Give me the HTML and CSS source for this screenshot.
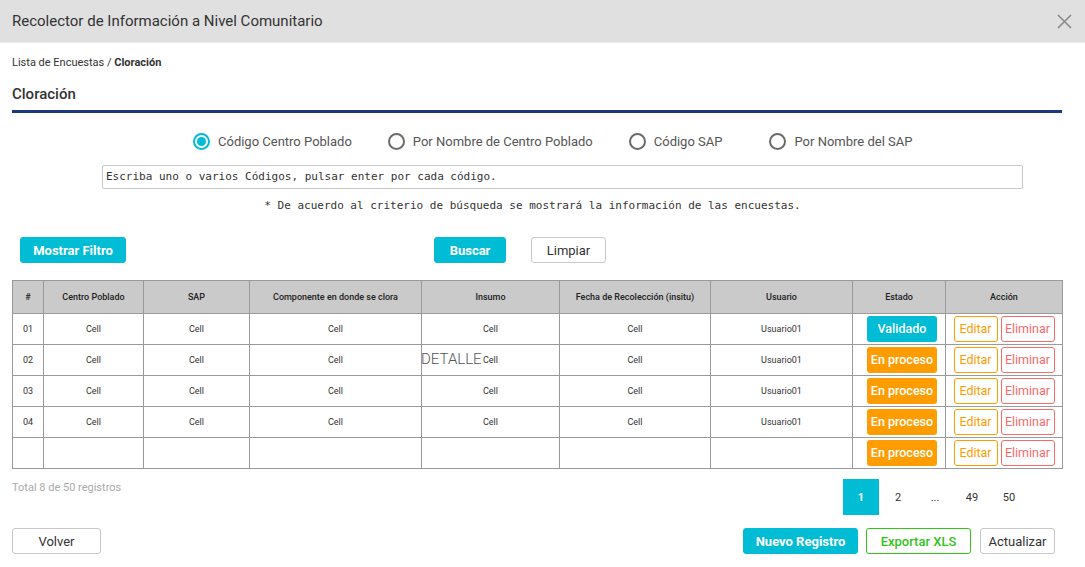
FILE: index.html
```html
<!DOCTYPE html>
<html lang="es">
<head>
<meta charset="utf-8">
<title>Recolector de Información a Nivel Comunitario</title>
<link rel="stylesheet" href="styles.css">
</head>
<body>
<div class="modal">
  <header class="modal-header">
    <h1 class="modal-title">Recolector de Información a Nivel Comunitario</h1>
    <button class="close" aria-label="Cerrar">
      <svg width="15" height="15" viewBox="0 0 15 15"><path d="M1 1L14 14M14 1L1 14" stroke="#8a8a8a" stroke-width="1.6" fill="none"/></svg>
    </button>
  </header>
  <main class="modal-body">
    <nav class="breadcrumb">Lista de Encuestas / <b>Cloración</b></nav>
    <h2 class="section-title">Cloración</h2>

    <div class="radios">
      <label class="radio checked"><span class="dot"></span>Código Centro Poblado</label>
      <label class="radio"><span class="dot"></span>Por Nombre de Centro Poblado</label>
      <label class="radio r3"><span class="dot"></span>Código SAP</label>
      <label class="radio"><span class="dot"></span>Por Nombre del SAP</label>
    </div>
    <div class="search-box">Escriba uno o varios Códigos, pulsar enter por cada código.</div>
    <p class="note">* De acuerdo al criterio de búsqueda se mostrará la información de las encuestas.</p>

    <div class="actions">
      <button class="btn btn-primary filtro">Mostrar Filtro</button>
      <button class="btn btn-primary buscar">Buscar</button>
      <button class="btn btn-default limpiar">Limpiar</button>
    </div>

    <div class="table-wrap">
      <table class="grid">
        <colgroup>
          <col style="width:31px"><col style="width:100px"><col style="width:106px"><col style="width:172px"><col style="width:138px"><col style="width:151px"><col style="width:142px"><col style="width:93px"><col style="width:117px">
        </colgroup>
        <thead>
          <tr><th>#</th><th>Centro Poblado</th><th>SAP</th><th>Componente en donde se clora</th><th>Insumo</th><th>Fecha de Recolección (insitu)</th><th>Usuario</th><th>Estado</th><th>Acción</th></tr>
        </thead>
        <tbody>
          <tr><td class="num">01</td><td>Cell</td><td>Cell</td><td>Cell</td><td>Cell</td><td>Cell</td><td>Usuario01</td><td class="st"><span class="badge ok">Validado</span></td><td class="acts"><span class="ob edit">Editar</span><span class="ob del">Eliminar</span></td></tr>
          <tr><td class="num">02</td><td>Cell</td><td>Cell</td><td>Cell</td><td>Cell</td><td>Cell</td><td>Usuario01</td><td class="st"><span class="badge wip">En proceso</span></td><td class="acts"><span class="ob edit">Editar</span><span class="ob del">Eliminar</span></td></tr>
          <tr><td class="num">03</td><td>Cell</td><td>Cell</td><td>Cell</td><td>Cell</td><td>Cell</td><td>Usuario01</td><td class="st"><span class="badge wip">En proceso</span></td><td class="acts"><span class="ob edit">Editar</span><span class="ob del">Eliminar</span></td></tr>
          <tr><td class="num">04</td><td>Cell</td><td>Cell</td><td>Cell</td><td>Cell</td><td>Cell</td><td>Usuario01</td><td class="st"><span class="badge wip">En proceso</span></td><td class="acts"><span class="ob edit">Editar</span><span class="ob del">Eliminar</span></td></tr>
          <tr><td class="num"></td><td></td><td></td><td></td><td></td><td></td><td></td><td class="st"><span class="badge wip">En proceso</span></td><td class="acts"><span class="ob edit">Editar</span><span class="ob del">Eliminar</span></td></tr>
        </tbody>
      </table>
      <span class="detalle">DETALLE</span>
    </div>

    <div class="footer-info">
      <span class="total">Total 8 de 50 registros</span>
      <ul class="pager">
        <li class="active">1</li><li>2</li><li>...</li><li>49</li><li>50</li>
      </ul>
    </div>

    <div class="bottom">
      <button class="btn btn-default volver">Volver</button>
      <div class="bottom-right">
        <button class="btn btn-primary nuevo">Nuevo Registro</button>
        <button class="btn btn-green exportar">Exportar XLS</button>
        <button class="btn btn-default actualizar">Actualizar</button>
      </div>
    </div>
  </main>
</div>
</body>
</html>
```
FILE: styles.css
```css
* { box-sizing: border-box; }
html, body { margin: 0; padding: 0; background: #fff; }
body { font-family: Roboto, "Noto Sans", Arial, sans-serif; color: #333; width: 1085px; height: 567px; overflow: hidden; }

.modal-header {
  height: 43px;
  background: #e0e0e0;
  border-bottom: 1px solid #ececec;
  display: flex;
  align-items: center;
  justify-content: space-between;
  padding: 0 13px 0 12px;
}
.modal-title { margin: 0; font-size: 15px; font-weight: 400; color: #333; }
.close { border: 0; background: none; padding: 0; width: 15px; height: 15px; display: flex; }

.modal-body { padding: 0 23px 0 12px; }

.breadcrumb { margin-top: 13px; font-size: 11px; line-height: 14px; color: #333; }
.breadcrumb b { font-weight: 700; }

.section-title {
  margin: 14px 0 0;
  font-size: 15px;
  line-height: 20px;
  font-weight: 500;
  color: #333;
  padding-bottom: 6px;
  border-bottom: 3px solid #1d3782;
}

.radios { display: flex; align-items: center; margin: 20px 0 0 181px; height: 16px; }
.radio { display: flex; align-items: center; font-size: 13px; color: #555; margin-right: 36px; }
.radio.r3 { margin-right: 47px; }
.dot {
  width: 17px; height: 17px;
  border: 2px solid #6b6b6b;
  border-radius: 50%;
  margin-right: 8px;
  display: inline-flex; align-items: center; justify-content: center;
}
.radio.checked .dot { border-color: #00bcd4; }
.radio.checked .dot::after { content: ""; width: 9px; height: 9px; border-radius: 50%; background: #00bcd4; }

.search-box {
  margin: 16px 0 0 90px;
  width: 921px;
  height: 24px;
  border: 1px solid #c8c8c8;
  border-radius: 2px;
  font-family: "DejaVu Sans Mono", "Liberation Mono", monospace;
  font-size: 11px;
  line-height: 22px;
  padding-left: 3px;
  color: #333;
}
.note {
  margin: 10px 0 0;
  text-align: center;
  padding-right: 9px;
  font-family: "DejaVu Sans Mono", "Liberation Mono", monospace;
  font-size: 11px;
  line-height: 14px;
  color: #333;
}

.btn {
  font-family: Roboto, "Noto Sans", Arial, sans-serif;
  font-size: 13px;
  height: 26px;
  border-radius: 3px;
  padding: 0;
  cursor: pointer;
}
.btn-primary { background: #00bcd4; color: #fff; border: 1px solid #00bcd4; font-weight: 700; }
.btn-default { background: #fff; color: #333; border: 1px solid #c8c8c8; }
.btn-green { background: #fff; color: #33c41a; border: 1px solid #33c41a; font-weight: 500; }

.actions { display: flex; margin-top: 24px; padding-left: 8px; }
.filtro { width: 106px; }
.buscar { width: 72px; margin-left: 308px; }
.limpiar { width: 75px; margin-left: 25px; }

.table-wrap { position: relative; margin-top: 17px; }
.grid { border-collapse: collapse; table-layout: fixed; width: 1050px; }
.grid th, .grid td { border: 1px solid #9a9a9a; text-align: center; padding: 0; }
.grid th { background: #cacaca; height: 33px; font-size: 9px; font-weight: 500; color: #222; }
.grid td { height: 31px; font-size: 9px; color: #333; }
.grid td.num { text-align: left; padding-left: 10px; }
.grid td.st { padding-left: 6px; }

.badge {
  display: inline-block;
  width: 70px; height: 26px;
  line-height: 26px;
  border-radius: 3px;
  color: #fff;
  font-size: 12.5px;
  font-weight: 500;
  vertical-align: middle;
}
.badge.ok { background: #00bcd4; }
.badge.wip { background: #ff9d00; }

.acts { white-space: nowrap; }
.ob {
  display: inline-block;
  height: 26px; line-height: 24px;
  border-radius: 3px;
  font-size: 12.5px;
  vertical-align: middle;
  background: #fff;
}
.ob.edit { width: 44px; border: 1px solid #ff9d00; color: #ff9d00; }
.ob.del { width: 54px; border: 1px solid #f76a6a; color: #f76a6a; margin-left: 3px; }

.detalle {
  position: absolute;
  left: 409px; top: 70px;
  font-size: 15px;
  font-weight: 300;
  color: #555;
  line-height: 18px;
}

.footer-info { display: flex; justify-content: space-between; align-items: flex-start; margin-top: 10px; }
.total { font-size: 11px; line-height: 14px; color: #aaa; margin-top: 2px; }
.pager { list-style: none; margin: 0 35px 0 0; padding: 0; display: flex; }
.pager li { width: 36px; height: 36px; margin-left: 1px; display: flex; align-items: center; justify-content: center; font-size: 11px; color: #333; }
.pager li.active { background: #00bcd4; color: #fff; font-weight: 700; }

.bottom { display: flex; justify-content: space-between; margin-top: 13px; padding-right: 7px; }
.volver { width: 89px; }
.bottom-right { display: flex; }
.nuevo { width: 115px; }
.exportar { width: 105px; margin-left: 8px; }
.actualizar { width: 75px; margin-left: 9px; }
```
